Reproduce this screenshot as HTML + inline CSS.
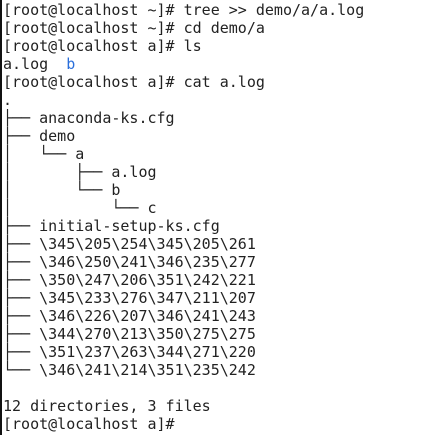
<!DOCTYPE html>
<html><head><style>
html,body{margin:0;padding:0;background:#fff;}
body{width:443px;height:435px;overflow:hidden;position:relative;}
.bar{position:absolute;left:0;top:0;width:2px;height:435px;background:#111;}
pre{margin:0;position:absolute;left:3px;top:1px;font-family:"DejaVu Sans Mono","Liberation Mono",monospace;font-size:15px;line-height:18px;color:#222;}
.b{color:#2a6fdb;}
</style></head><body>
<div class="bar"></div>
<pre>[root@localhost ~]# tree &gt;&gt; demo/a/a.log
[root@localhost ~]# cd demo/a
[root@localhost a]# ls
a.log  <span class="b">b</span>
[root@localhost a]# cat a.log
.
├── anaconda-ks.cfg
├── demo
│   └── a
│       ├── a.log
│       └── b
│           └── c
├── initial-setup-ks.cfg
├── \345\205\254\345\205\261
├── \346\250\241\346\235\277
├── \350\247\206\351\242\221
├── \345\233\276\347\211\207
├── \346\226\207\346\241\243
├── \344\270\213\350\275\275
├── \351\237\263\344\271\220
└── \346\241\214\351\235\242

12 directories, 3 files
[root@localhost a]# </pre>
</body></html>
